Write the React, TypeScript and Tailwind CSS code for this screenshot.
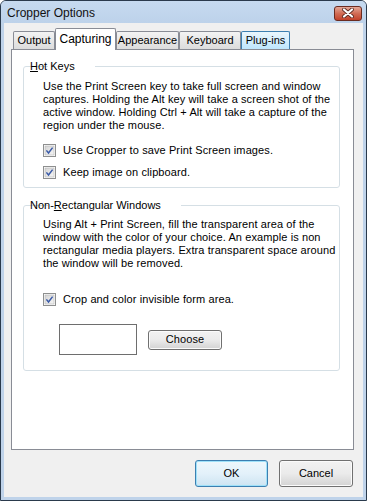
const font = { fontFamily: '"Liberation Sans", Arial, sans-serif' };

const CheckBox = () => (
  <svg width="13" height="13" viewBox="0 0 13 13" className="shrink-0">
    <defs>
      <linearGradient id="cbg" x1="0" y1="0" x2="1" y2="1">
        <stop offset="0" stopColor="#d4d4d4" />
        <stop offset="1" stopColor="#f6f6f6" />
      </linearGradient>
    </defs>
    <rect x="0.5" y="0.5" width="12" height="12" fill="#fff" stroke="#8e8f8f" />
    <rect x="2" y="2" width="9" height="9" fill="url(#cbg)" stroke="#b4b4b4" strokeWidth="0.6" />
    <path d="M3.4 6.4 L5.5 9 L9.6 3.6" fill="none" stroke="#3b5ba8" strokeWidth="1.5" />
  </svg>
);

const Check = ({ label }: { label: string }) => (
  <div className="flex items-center h-[13px] gap-[7px]">
    <CheckBox />
    <span className="leading-[13px]">{label}</span>
  </div>
);

const Tab = ({ label, active, hover }: { label: string; active?: boolean; hover?: boolean }) => {
  if (active)
    return (
      <div className="relative z-10 h-[22px] w-[61px] bg-white border border-b-0 border-[#898c95] rounded-t-[2px] flex justify-center pt-[3px] text-[12px] leading-[14px]">
        {label}
      </div>
    );
  return (
    <div
      className={
        "mt-[3px] h-[18px] border border-b-0 rounded-t-[2px] flex justify-center items-center text-[11px] " +
        (hover
          ? "border-[#3c7fb1] bg-gradient-to-b from-[#eaf6fd] to-[#bee6fd]"
          : "border-[#898c95] bg-gradient-to-b from-[#f3f3f3] to-[#dcdcdc]")
      }
    >
      {label}
    </div>
  );
};

const Button = ({ label, def, w, h }: { label: string; def?: boolean; w: string; h: string }) => (
  <div
    className={
      `${w} ${h} rounded-[3px] border flex items-center justify-center text-[11px] ` +
      (def
        ? "border-[#3c7fb1] shadow-[inset_0_0_0_1px_#9fe1f9] bg-gradient-to-b from-[#eef7fc] via-[#e3f1fa] to-[#cde4f2]"
        : "border-[#707070] shadow-[inset_0_0_0_1px_#fbfbfb] bg-gradient-to-b from-[#f2f2f2] via-[#ebebeb] to-[#d3d3d3]")
    }
  >
    {label}
  </div>
);

export default function App() {
  return (
    <div style={font} className="w-[367px] h-[501px] bg-[#bfd3ea] border border-[#2a3a4c] rounded-t-[6px] flex flex-col text-black text-[11px] overflow-hidden">
      {/* title bar */}
      <div className="h-[22px] shrink-0 flex items-center bg-gradient-to-b from-[#c6daf0] to-[#bdd2ea] pl-[6px] pr-[3px]">
        <span className="text-[12px] mt-[1px] text-[#111]">Cropper Options</span>
        <div className="ml-auto mt-[2px] mr-px w-[28px] h-[15px] rounded-[3px] border border-[#6a2b20] bg-gradient-to-b from-[#e3a797] via-[#d16c55] to-[#c2412a] flex items-center justify-center">
          <svg width="14" height="10" viewBox="0 0 14 10">
            <path d="M3 1.5 L11 8.5 M11 1.5 L3 8.5" stroke="#5a2a22" strokeWidth="3.8" strokeLinecap="round" />
            <path d="M3 1.5 L11 8.5 M11 1.5 L3 8.5" stroke="#ffffff" strokeWidth="2.2" strokeLinecap="round" />
          </svg>
        </div>
      </div>

      {/* client */}
      <div className="mx-[3px] h-[474px] bg-[#f0f0f0] flex flex-col pt-[5px]">
        <div className="flex h-[22px] -mb-px ml-[9px] relative z-10">
          <div className="w-[42px]"><Tab label="Output" /></div>
          <Tab label="Capturing" active />
          <div className="w-[63px]"><Tab label="Appearance" /></div>
          <div className="w-[62px]"><Tab label="Keyboard" /></div>
          <div className="w-[49px]"><Tab label="Plug-ins" hover /></div>
        </div>

        <div className="ml-[7px] w-[343px] h-[401px] bg-white border border-[#898c95] flex flex-col tracking-[0.1px]">
          <fieldset className="mt-[10px] ml-[11px] w-[317px] border border-[#d5dfe5] rounded-[3px] pt-[7px] pb-[8px] pl-[19px]">
            <legend className="ml-[5px] px-[1px] leading-[13px] -translate-x-[19px] tracking-normal">
              <span className="underline">H</span>ot Keys
            </legend>
            <p className="leading-[13px]">
              Use the Print Screen key to take full screen and window<br />
              captures. Holding the Alt key will take a screen shot of the<br />
              active window. Holding Ctrl + Alt will take a capture of the<br />
              region under the mouse.
            </p>
            <div className="mt-[12px]">
              <Check label="Use Cropper to save Print Screen images." />
            </div>
            <div className="mt-[9px]">
              <Check label="Keep image on clipboard." />
            </div>
          </fieldset>

          <fieldset className="mt-[11px] ml-[11px] w-[317px] border border-[#d5dfe5] rounded-[3px] pt-[6px] pb-[15px] pl-[19px]">
            <legend className="ml-[5px] px-[1px] leading-[13px] -translate-x-[19px] tracking-normal">
              Non-<span className="underline">R</span>ectangular Windows
            </legend>
            <p className="leading-[13px]">
              Using Alt + Print Screen, fill the transparent area of the<br />
              window with the color of your choice. An example is non<br />
              rectangular media players. Extra transparent space around<br />
              the window will be removed.
            </p>
            <div className="mt-[23px]">
              <Check label="Crop and color invisible form area." />
            </div>
            <div className="mt-[18px] ml-[16px] flex items-center gap-[11px]">
              <div className="w-[78px] h-[31px] bg-white border border-[#6e6e6e]" />
              <Button label="Choose" w="w-[74px]" h="h-[20px]" />
            </div>
          </fieldset>
        </div>

        <div className="mt-[10px] flex justify-end gap-[11px] pr-[10px]">
          <Button label="OK" def w="w-[73px]" h="h-[27px]" />
          <Button label="Cancel" w="w-[74px]" h="h-[27px]" />
        </div>
      </div>
    </div>
  );
}
